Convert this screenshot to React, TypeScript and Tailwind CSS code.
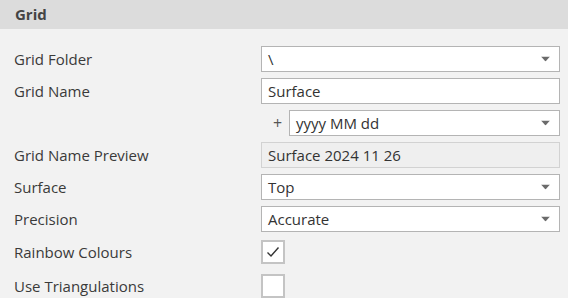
import React from "react";

const font = { fontFamily: '"Open Sans", "Noto Sans", sans-serif' };

function Arrow() {
  return (
    <svg width="9" height="5" viewBox="0 0 9 5" className="absolute right-[9px] top-1/2 -translate-y-1/2">
      <path d="M0 0 H9 L4.5 5 Z" fill="#6b6b6b" />
    </svg>
  );
}

function Combo({ value, className = "" }: { value: string; className?: string }) {
  return (
    <div className={`relative h-[26px] bg-white border border-[#b4b4b4] flex items-center pl-[6px] text-[15px] text-[#333] ${className}`}>
      {value}
      <Arrow />
    </div>
  );
}

function Row({ label, children, className = "" }: { label: string; children: React.ReactNode; className?: string }) {
  return (
    <div className={`flex items-center ${className}`}>
      <div className="w-[261px] shrink-0 pl-[14px] text-[15px] text-[#3a3a3a]">{label}</div>
      <div className="w-[299px] shrink-0">{children}</div>
    </div>
  );
}

function Check({ checked }: { checked: boolean }) {
  return (
    <div className="w-[24px] h-[24px] bg-white border-2 border-[#c4c4c4] flex items-center justify-center">
      {checked && (
        <svg width="14" height="12" viewBox="0 0 14 12">
          <path d="M1.5 6.5 L5 10 L12.5 1.5" stroke="#333" strokeWidth="1.4" fill="none" />
        </svg>
      )}
    </div>
  );
}

export default function App() {
  return (
    <div className="w-[568px] h-[298px] bg-[#f2f2f2] overflow-hidden" style={font}>
      <div className="h-[29px] bg-[#dcdcdc] flex items-center pl-[15px] text-[15px] font-bold text-[#444]">Grid</div>
      <div className="pt-[17px] flex flex-col">
        <Row label="Grid Folder">
          <Combo value="\" />
        </Row>
        <Row label="Grid Name" className="mt-[6px]">
          <div className="h-[26px] bg-white border border-[#b4b4b4] flex items-center pl-[6px] text-[15px] text-[#333]">Surface</div>
        </Row>
        <Row label="" className="mt-[6px]">
          <div className="flex items-center">
            <span className="w-[28px] pl-[12px] text-[16px] text-[#555]">+</span>
            <Combo value="yyyy MM dd" className="flex-1" />
          </div>
        </Row>
        <Row label="Grid Name Preview" className="mt-[6px]">
          <div className="h-[26px] bg-[#efefef] border border-[#d2d2d2] flex items-center pl-[6px] text-[15px] text-[#333]">Surface 2024 11 26</div>
        </Row>
        <Row label="Surface" className="mt-[6px]">
          <Combo value="Top" />
        </Row>
        <Row label="Precision" className="mt-[6px]">
          <Combo value="Accurate" />
        </Row>
        <Row label="Rainbow Colours" className="mt-[8px]">
          <Check checked />
        </Row>
        <Row label="Use Triangulations" className="mt-[10px]">
          <Check checked={false} />
        </Row>
      </div>
    </div>
  );
}
